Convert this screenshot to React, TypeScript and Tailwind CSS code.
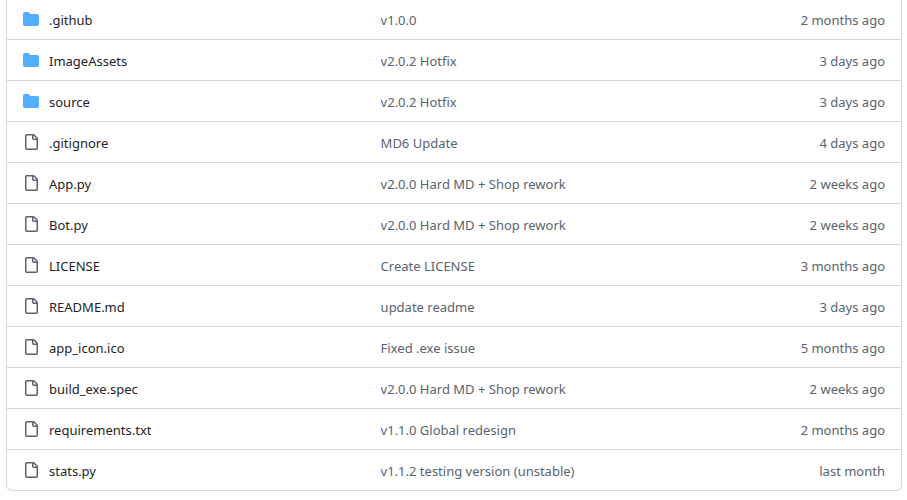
import React from 'react';

interface Entry {
  name: string;
  kind: 'dir' | 'file';
  message: string;
  age: string;
}

const entries: Entry[] = [
  { name: '.github', kind: 'dir', message: 'v1.0.0', age: '2 months ago' },
  { name: 'ImageAssets', kind: 'dir', message: 'v2.0.2 Hotfix', age: '3 days ago' },
  { name: 'source', kind: 'dir', message: 'v2.0.2 Hotfix', age: '3 days ago' },
  { name: '.gitignore', kind: 'file', message: 'MD6 Update', age: '4 days ago' },
  { name: 'App.py', kind: 'file', message: 'v2.0.0 Hard MD + Shop rework', age: '2 weeks ago' },
  { name: 'Bot.py', kind: 'file', message: 'v2.0.0 Hard MD + Shop rework', age: '2 weeks ago' },
  { name: 'LICENSE', kind: 'file', message: 'Create LICENSE', age: '3 months ago' },
  { name: 'README.md', kind: 'file', message: 'update readme', age: '3 days ago' },
  { name: 'app_icon.ico', kind: 'file', message: 'Fixed .exe issue', age: '5 months ago' },
  { name: 'build_exe.spec', kind: 'file', message: 'v2.0.0 Hard MD + Shop rework', age: '2 weeks ago' },
  { name: 'requirements.txt', kind: 'file', message: 'v1.1.0 Global redesign', age: '2 months ago' },
  { name: 'stats.py', kind: 'file', message: 'v1.1.2 testing version (unstable)', age: 'last month' },
];

const FolderIcon = () => (
  <svg viewBox="0 0 16 16" className="mt-0.5 h-4 w-4 shrink-0 fill-[#54aeff]" aria-hidden="true">
    <path d="M1.75 1A1.75 1.75 0 0 0 0 2.75v10.5C0 14.216.784 15 1.75 15h12.5A1.75 1.75 0 0 0 16 13.25v-8.5A1.75 1.75 0 0 0 14.25 3H7.5a.25.25 0 0 1-.2-.1l-.9-1.2C6.07 1.26 5.55 1 5 1H1.75Z" />
  </svg>
);

const FileIcon = () => (
  <svg viewBox="0 0 16 16" className="mt-0.5 h-4 w-4 shrink-0 fill-[#59636e]" aria-hidden="true">
    <path d="M2 1.75C2 .784 2.784 0 3.75 0h6.586c.464 0 .909.184 1.237.513l2.914 2.914c.329.328.513.773.513 1.237v9.586A1.75 1.75 0 0 1 13.25 16h-9.5A1.75 1.75 0 0 1 2 14.25Zm1.75-.25a.25.25 0 0 0-.25.25v12.5c0 .138.112.25.25.25h9.5a.25.25 0 0 0 .25-.25V6h-2.75A1.75 1.75 0 0 1 9 4.25V1.5Zm6.75.062V4.25c0 .138.112.25.25.25h2.688l-.011-.013-2.914-2.914-.013-.011Z" />
  </svg>
);

const cell = 'border-b border-[#d1d9e0] px-4 pt-2.5 pb-2 group-first:pt-[9px] group-last:border-b-0';

const App: React.FC = () => {
  return (
    <main className="bg-white pl-1.5 pr-[5px] font-['Noto_Sans',sans-serif] text-[13px] leading-[22px] text-[#59636e]">
      <div className="overflow-hidden rounded-b-md border border-t-0 border-[#d1d9e0]">
        <table className="w-full table-fixed border-separate border-spacing-0">
          <tbody>
            {entries.map((entry) => (
              <tr key={entry.name} className="group">
                <td className={`w-2/5 ${cell}`}>
                  <div className="flex items-start gap-2.5">
                    {entry.kind === 'dir' ? <FolderIcon /> : <FileIcon />}
                    <a href="#" className="truncate text-[#1f2328] hover:underline">
                      {entry.name}
                    </a>
                  </div>
                </td>
                <td className={cell}>
                  <a href="#" className="block truncate hover:underline">
                    {entry.message}
                  </a>
                </td>
                <td className={`w-36 text-right whitespace-nowrap ${cell}`}>{entry.age}</td>
              </tr>
            ))}
          </tbody>
        </table>
      </div>
    </main>
  );
};

export default App;
